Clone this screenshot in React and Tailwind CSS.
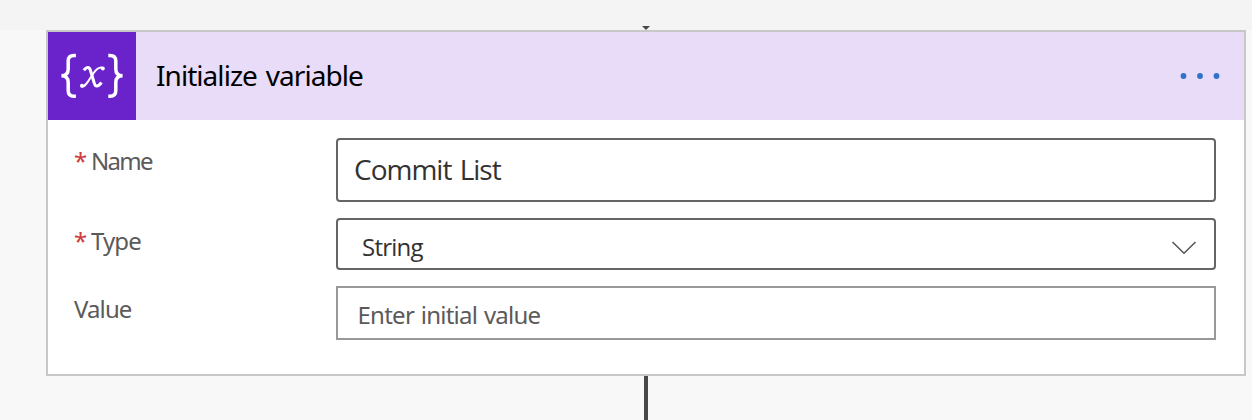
function VariableIcon() {
  return (
    <div className="flex h-[88px] w-[88px] shrink-0 items-center justify-center bg-[#6a22cb]">
      <svg width="88" height="88" viewBox="0 0 88 88" fill="none" stroke="#ffffff" strokeLinecap="butt">
        <path d="M27.900 23.500H26C22 23.500 20.200 25.200 20.200 29V37C20.200 41.300 18.500 43.800 13.400 43.800C18.500 43.800 20.200 46.300 20.200 50.600V58.500C20.200 62.500 22 64.300 26 64.300H27.900" strokeWidth="3.500" />
        <path d="M60.300 23.500H62C66 23.500 67.800 25.200 67.800 29V37C67.800 41.300 69.500 43.800 74.600 43.800C69.500 43.800 67.800 46.300 67.800 50.600V58.500C67.800 62.500 66 64.300 62 64.300H60.300" strokeWidth="3.500" />
        <path d="M35.800 38.200C38.800 34.500 41.300 34.500 42.500 38.500L46.200 51C47.300 55.300 50 55 53.500 50.500" strokeWidth="3" />
        <path d="M55.500 36.200C51.500 34 48.500 37 45.300 41.500L40.500 48.800C38 52.500 36 55.500 33 54" strokeWidth="2" />
        <circle cx="54.800" cy="36.600" r="2" fill="#ffffff" stroke="none" />
        <circle cx="34" cy="53.700" r="2" fill="#ffffff" stroke="none" />
      </svg>
    </div>
  );
}

function Label({ required, children, className }) {
  return (
    <div className={"flex w-[262px] shrink-0 text-[24px] leading-[32px] text-[#5c5a59] " + className}>
      {required && <span className="w-[17px] shrink-0 text-[#cf3c3c]">*</span>}
      <span>{children}</span>
    </div>
  );
}

export default function App() {
  return (
    <div className="h-[420px] w-[1252px] overflow-hidden bg-[#f8f8f8] font-['Noto_Sans',sans-serif]">
      <div className="flex h-[30px] flex-col items-center justify-end bg-[#f4f4f4] pl-[40px]">
        <svg width="8" height="4" viewBox="0 0 8 4">
          <path d="M0 0H8L4 4Z" fill="#484848" />
        </svg>
      </div>
      <div className="ml-[46px] h-[346px] w-[1200px] border-2 border-[#c8c8c8] bg-white">
        <div className="flex h-[88px] items-center bg-[#e8dcf8]">
          <VariableIcon />
          <h1 className="ml-[20px] grow pb-[2px] text-[28px] leading-[40px] tracking-[-0.950px] text-black [word-spacing:2.500px]">Initialize variable</h1>
          <svg className="mr-[22px]" width="44" height="8" viewBox="0 0 44 8" fill="#2f72c6">
            <circle cx="5.500" cy="4" r="2.900" />
            <circle cx="22" cy="4" r="2.900" />
            <circle cx="38.500" cy="4" r="2.900" />
          </svg>
        </div>
        <div className="flex flex-col gap-4 pt-[18px] pr-7 pl-[26px]">
          <div className="flex h-[64px]">
            <Label required className="pt-[7px] tracking-[-1.700px]">Name</Label>
            <div className="flex grow items-center rounded-[4px] border-2 border-[#666464] pb-[2px] pl-4 font-['Open_Sans',sans-serif] text-[28px] leading-[40px] text-[#333231]">
              <span className="tracking-[-1px] [word-spacing:2px]">Commit List</span>
            </div>
          </div>
          <div className="flex h-[52px]">
            <Label required className="pt-[7px] tracking-[-0.9px]">Type</Label>
            <div className="flex grow items-center justify-between rounded-[4px] border-2 border-[#666464] pr-[17px] pl-6 font-['Open_Sans',sans-serif] text-[24px] leading-[32px] text-[#333231]">
              <span className="pt-[6px] tracking-[-0.750px]">String</span>
              <svg className="mt-[7px]" width="26" height="14" viewBox="0 0 26 14" fill="none" stroke="#555353" strokeWidth="1.500">
                <path d="M1.500 1L13 12.300L24.500 1" />
              </svg>
            </div>
          </div>
          <div className="flex h-[54px]">
            <Label className="pt-[7px] tracking-[-0.9px]">Value</Label>
            <div className="flex grow items-center border-2 border-[#999797] pl-[19.500px] text-[24px] leading-[32px] text-[#5c5a59]">
              <span className="pt-[3px] tracking-[-0.750px] [word-spacing:1.200px]">Enter initial value</span>
            </div>
          </div>
        </div>
      </div>
      <div className="ml-[644px] h-[44px] w-1 bg-[#484848]" />
    </div>
  );
}
